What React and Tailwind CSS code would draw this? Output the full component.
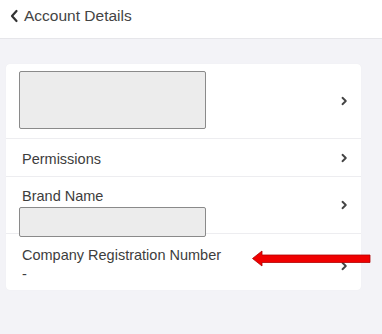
import React from 'react';

const Chevron = () => (
  <svg width="8" height="10" viewBox="0 0 8 10" className="shrink-0">
    <path d="M2.5 1.8 L5.8 5 L2.5 8.2" fill="none" stroke="#444" strokeWidth="1.9" strokeLinecap="round" strokeLinejoin="round" />
  </svg>
);

const Placeholder = ({ className }) => (
  <div className={`bg-[#ececec] border border-[#8a8a8a] rounded-[2px] ${className}`} />
);

export default function App() {
  return (
    <div className="relative w-[382px] h-[334px] overflow-hidden bg-[#f3f3f7] text-[#3d3d3d] font-['Liberation_Sans',Arial,sans-serif]">
      {/* Header */}
      <div className="h-[39px] bg-white border-b border-[#e6e6ea] flex items-start pt-[6px] pl-[9px] gap-[5px]">
        <svg width="10" height="14" viewBox="0 0 10 14" className="mt-[3px]">
          <path d="M7.5 2 L3 7 L7.5 12" fill="none" stroke="#333" strokeWidth="2.2" strokeLinecap="round" strokeLinejoin="round" />
        </svg>
        <span className="text-[15.5px] leading-[20px] text-[#444]">Account Details</span>
      </div>

      {/* Card */}
      <div className="pt-[25px] pl-[6px] pr-[21px]">
        <div className="bg-white rounded-[4px] shadow-[0_0_1px_rgba(0,0,0,0.06)]">
          <div className="h-[74px] flex items-center justify-between pl-[13px] pr-[13px]">
            <Placeholder className="w-[187px] h-[58px] -mt-[2px]" />
            <Chevron />
          </div>
          <div className="h-[38px] border-t border-[#ededf0] flex items-center justify-between pl-[16px] pr-[13px]">
            <span className="text-[14.5px] leading-[17px] mt-[3px]">Permissions</span>
            <Chevron />
          </div>
          <div className="h-[57px] border-t border-[#ededf0] flex items-start justify-between pl-[13px] pr-[13px]">
            <div className="flex flex-col pt-[11px]">
              <span className="pl-[3px] text-[14.5px] leading-[17px]">Brand Name</span>
              <Placeholder className="relative z-10 mt-[2px] w-[187px] h-[30px]" />
            </div>
            <div className="pt-[23px]">
              <Chevron />
            </div>
          </div>
          <div className="h-[57px] border-t border-[#ededf0] flex items-start justify-between pl-[16px] pr-[13px]">
            <div className="flex flex-col pt-[13px] text-[14.5px] leading-[17px]">
              <span>Company Registration Number</span>
              <span className="mt-[2px]">-</span>
            </div>
            <div className="pt-[27px]">
              <Chevron />
            </div>
          </div>
        </div>
      </div>

      {/* Red arrow annotation */}
      <svg className="absolute left-[251px] top-[249px]" width="121" height="19" viewBox="0 0 121 19">
        <path d="M1.5 9.5 L11 2 L11 6 L119 6 L119 13.5 L11 13.5 L11 17 Z" fill="#f00000" stroke="#b00000" strokeWidth="0.8" strokeLinejoin="round" />
      </svg>
    </div>
  );
}
